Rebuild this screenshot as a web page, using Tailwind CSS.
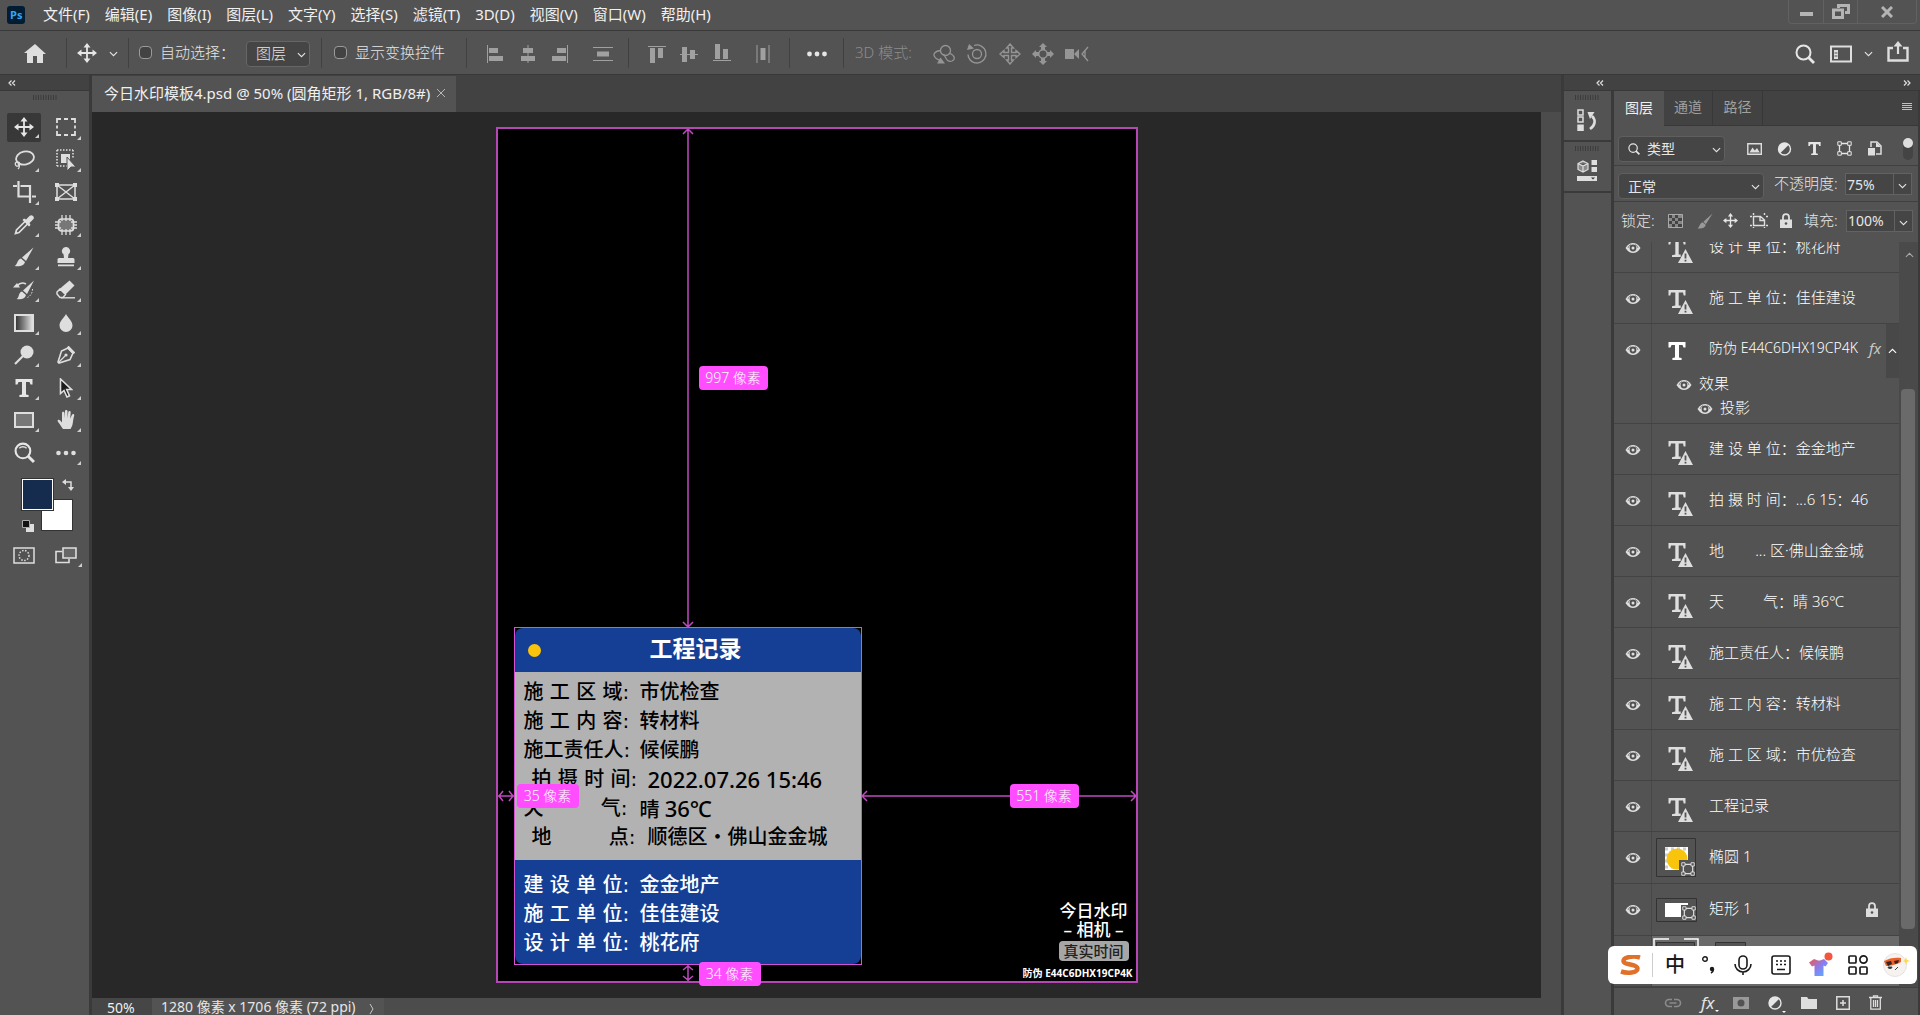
<!DOCTYPE html>
<html lang="zh-CN">
<head>
    <meta charset="UTF-8">
    <meta name="viewport" content="width=device-width, initial-scale=1.0">
    <title>今日水印模板4.psd @ 50%</title>
    <script src="https://cdn.jsdelivr.net/npm/@tailwindcss/browser@4"></script>
    <style>
        body { font-family: "Noto Sans", "Noto Sans CJK SC", sans-serif; }
        .label-font { font-family: "DejaVu Sans", "Noto Sans CJK SC", sans-serif; }
    </style>
</head>
<body class="bg-[#535353] text-[#e6e6e6]">

    <!-- Shared icons -->
    <svg class="hidden">
        <symbol id="eye" viewBox="0 0 16 12"><path d="M0.5 6C3 2.2 5.4 1 8 1s5 1.200 7.500 5C13 9.800 10.600 11 8 11S3 9.800 0.500 6z" fill="#dedede"/><circle cx="8" cy="6" r="3.400" fill="#505050"/><circle cx="8" cy="6" r="1.500" fill="#dedede"/><path d="M3 6a5 5 0 0 1 3-3.500M13 6a5 5 0 0 0-3-3.500" fill="none" stroke="#505050" stroke-width=".6"/></symbol>
        <symbol id="tee" viewBox="0 0 18 18"><path d="M.5 0h17v5.500h-2L14.500 3H11v12.500l2.600.6V18H4.400v-1.900l2.600-.6V3H3.500l-1 2.500h-2z" fill="currentColor"/></symbol>
        <symbol id="tee-warn" viewBox="0 0 25 25"><path d="M.5 0h17v5.500h-1.800L15 2.500h-4.300V15.500h2V18H4v-1.700l3.300-.8V2.500H3l-.7 3H.5z" fill="#dedede"/><path d="M17.500 9L26 25H9z" fill="#535353"/><path d="M17.500 10L25 24H10z" fill="#dedede"/><path d="M17.500 14.500v5M17.500 20.700v1.800" stroke="#535353" stroke-width="1.800"/></symbol>
        <symbol id="down" viewBox="0 0 10 6"><path d="M1 .8l4 4 4-4" fill="none" stroke="currentColor" stroke-width="1.200"/></symbol>
        <symbol id="corner" viewBox="0 0 4 4"><path d="M4 0v4H0z" fill="#cfcfcf"/></symbol>
        <symbol id="dbl-left" viewBox="0 0 8 6"><path d="M3.500.5L1 3l2.500 2.500M7 .5L4.500 3 7 5.500" fill="none" stroke="#dedede" stroke-width="1.200"/></symbol>
        <symbol id="dbl-right" viewBox="0 0 8 6"><path d="M1 .5L3.500 3 1 5.500M4.500.5L7 3 4.500 5.500" fill="none" stroke="#dedede" stroke-width="1.200"/></symbol>
        <symbol id="grip" viewBox="0 0 24 5"><path d="M.5 0v5M3 0v5M5.500 0v5M8 0v5M10.500 0v5M13 0v5M15.500 0v5M18 0v5M20.500 0v5M23 0v5" stroke="#3c3c3c"/></symbol>
        <symbol id="move" viewBox="0 0 20 20"><path d="M10 2v16M2 10h16" stroke="currentColor" stroke-width="1.800"/><path d="M10 0l3.500 4.500h-7zM10 20l3.500-4.500h-7zM0 10l4.500-3.500v7zM20 10l-4.500-3.500v7z" fill="currentColor"/></symbol>
        <symbol id="search" viewBox="0 0 20 20"><circle cx="8.500" cy="8.500" r="7" fill="none" stroke="currentColor" stroke-width="2"/><path d="M13.500 13.500l5.500 5.500" stroke="currentColor" stroke-width="2.800"/></symbol>
        <symbol id="shape" viewBox="0 0 15 15"><path d="M2.500 2.500h10v10h-10z" fill="none" stroke="currentColor" stroke-width="1.300"/><g fill="#535353" stroke="currentColor"><path d="M.8.800h3.500v3.500H.8zM10.700.8h3.500v3.500h-3.500zM.8 10.700h3.500v3.500H.8zM10.700 10.700h3.500v3.500h-3.500z"/></g></symbol>
        <symbol id="adjust" viewBox="0 0 14 14"><circle cx="7" cy="7" r="6" fill="none" stroke="currentColor" stroke-width="1.400"/><path d="M11.300 2.700A6 6 0 0 0 2.700 11.300z" fill="currentColor"/></symbol>
        <symbol id="lock" viewBox="0 0 12 15"><path d="M3 7V4.200a3 3 0 0 1 6 0V7" fill="none" stroke="#dedede" stroke-width="1.800"/><path d="M0 6.500h12V15H0z" fill="#dedede"/><circle cx="6" cy="10.500" r="1.300" fill="#535353"/></symbol>
    </svg>

    <div class="flex h-screen flex-col overflow-hidden">

        <!-- Menu bar -->
        <header class="flex h-[31px] shrink-0 items-start border-b border-[#383838]">
            <svg class="ml-[7px] mt-[6px] h-[18px] w-[18px]" viewBox="0 0 18 18"><rect width="18" height="18" rx="3" fill="#001d33"/><text x="3" y="13" font-size="11" font-weight="bold" font-family="Open Sans" fill="#35a5f8">Ps</text></svg>
            <nav class="ml-[18px] flex h-7 items-center gap-[15px] text-[15px] text-[#f0f0f0]">
                <a href="#">文件(F)</a>
                <a href="#">编辑(E)</a>
                <a href="#">图像(I)</a>
                <a href="#">图层(L)</a>
                <a href="#">文字(Y)</a>
                <a href="#">选择(S)</a>
                <a href="#">滤镜(T)</a>
                <a href="#">3D(D)</a>
                <a href="#">视图(V)</a>
                <a href="#">窗口(W)</a>
                <a href="#">帮助(H)</a>
            </nav>
            <div class="ml-auto mr-[3px] flex h-6 divide-x divide-[#616161] rounded-b border border-t-0 border-[#616161]">
                <button class="flex w-[35px] items-center justify-center" aria-label="最小化"><svg class="mt-1 h-1 w-[13px]" viewBox="0 0 13 4"><path d="M0 0h13v4H0z" fill="#b4b4b4"/></svg></button>
                <button class="flex w-[34px] items-center justify-center" aria-label="还原"><svg class="h-[15px] w-[18px]" viewBox="0 0 18 15"><path d="M6.500 4V1.500h10v7H13M1.500 6h9v7.500h-9z" fill="none" stroke="#b4b4b4" stroke-width="3"/></svg></button>
                <button class="flex w-[58px] items-center justify-center" aria-label="关闭"><svg class="h-3 w-3" viewBox="0 0 12 12"><path d="M1 1l10 10M11 1L1 11" stroke="#b4b4b4" stroke-width="3"/></svg></button>
            </div>
        </header>

        <!-- Options bar -->
        <div class="flex h-11 shrink-0 items-center border-b border-[#383838] text-[15px]">
            <div class="flex h-[30px] w-[67px] items-center justify-center border-r border-[#414141]">
                <button class="mr-[-3px] mt-[2px]" aria-label="主页"><svg class="h-[19px] w-[22px]" viewBox="0 0 22 19"><path d="M11 0l11 10h-3v9h-6v-7H9v7H3v-10H0z" fill="#dedede"/></svg></button>
            </div>
            <button class="flex h-[30px] w-[62px] items-center gap-[12px] border-r border-[#414141] pl-[10px]" aria-label="移动工具"><svg class="h-5 w-5"><use href="#move"/></svg><svg class="mt-[2px] h-[6px] w-[9px]"><use href="#down"/></svg></button>
            <input id="auto" type="checkbox" class="ml-[10px] h-[13px] w-[13px] appearance-none rounded-sm border border-[#9b9b9b] bg-[#434343]">
            <label for="auto" class="ml-2 w-[73px] whitespace-nowrap font-light">自动选择：</label>
            <div class="relative ml-[13px] mt-[2px] w-[64px]">
                <select aria-label="自动选择" class="h-[26px] w-full appearance-none rounded-sm border border-[#666] bg-[#454545] pl-[9px] text-[15px] font-light"><option>图层</option></select>
                <svg class="absolute right-1 top-[11px] h-[6px] w-[9px]"><use href="#down"/></svg>
            </div>
            <div class="ml-[11px] mr-[12px] h-[30px] w-px bg-[#414141]"></div>
            <input id="trans" type="checkbox" class="h-[13px] w-[13px] appearance-none rounded-sm border border-[#9b9b9b] bg-[#434343]">
            <label for="trans" class="ml-[8px] w-[90px] whitespace-nowrap font-light">显示变换控件</label>
            <div class="ml-[21px] h-[30px] w-px bg-[#414141]"></div>
            <!-- Align -->
            <div class="flex h-[30px] w-[162px] items-center border-r border-[#414141] pl-[19px] pt-[2px] text-[#a0a0a0]">
                <svg class="h-5 w-[18px]" viewBox="0 0 18 20"><path d="M1.500 1v18" stroke="currentColor"/><path d="M3 4h9v5H3zM3 12h14v5H3z" fill="currentColor"/></svg>
                <svg class="ml-[15px] h-5 w-[18px]" viewBox="0 0 18 20"><path d="M9 1v18" stroke="currentColor"/><path d="M4 4h10v5H4zM2 12h14v5H2z" fill="currentColor"/></svg>
                <svg class="ml-[14px] h-5 w-[18px]" viewBox="0 0 18 20"><path d="M16.500 1v18" stroke="currentColor"/><path d="M6 4h9v5H6zM1 12h14v5H1z" fill="currentColor"/></svg>
                <svg class="ml-[24px] h-5 w-[20px]" viewBox="0 0 20 20"><path d="M0 3.500h20M0 16.500h20" stroke="currentColor"/><path d="M4 7.500h12v5H4z" fill="currentColor"/></svg>
            </div>
            <div class="flex h-[30px] w-[161px] items-center border-r border-[#414141] pl-[18px] pt-[2px] text-[#a0a0a0]">
                <svg class="h-5 w-[20px]" viewBox="0 0 20 20"><path d="M1 2.500h18" stroke="currentColor"/><path d="M3 4h5v15H3zM11 4h5v10h-5z" fill="currentColor"/></svg>
                <svg class="ml-[12px] h-5 w-[20px]" viewBox="0 0 20 20"><path d="M1 10.500h18" stroke="currentColor"/><path d="M3 3h5v15H3zM11 6h5v9h-5z" fill="currentColor"/></svg>
                <svg class="ml-[13px] h-5 w-[20px]" viewBox="0 0 20 20"><path d="M1 16.500h18" stroke="currentColor"/><path d="M3 0h5v15H3zM11 5h5v10h-5z" fill="currentColor"/></svg>
                <svg class="ml-[24px] h-5 w-[14px]" viewBox="0 0 14 20"><path d="M1 1v18M13 1v18" stroke="currentColor"/><path d="M4.500 4h5v12h-5z" fill="currentColor"/></svg>
            </div>
            <button class="flex h-[30px] w-[54px] items-center justify-center border-r border-[#414141] pt-[2px]" aria-label="更多"><svg class="h-[6px] w-5" viewBox="0 0 20 6"><g fill="#e6e6e6"><circle cx="2.500" cy="3" r="2.400"/><circle cx="10" cy="3" r="2.400"/><circle cx="17.500" cy="3" r="2.400"/></g></svg></button>
            <span class="ml-[11px] w-[78px] whitespace-nowrap font-light text-[#8c8c8c]">3D 模式:</span>
            <div class="flex items-center gap-[11px] pt-[2px] text-[#959595]">
                <svg class="h-[22px] w-[22px]" viewBox="0 0 22 22"><circle cx="12.500" cy="7.500" r="5" fill="none" stroke="currentColor" stroke-width="1.300"/><path d="M7.500 7.500C2 8 0 11 1.500 13.500c1 2 4 3.500 7 4M17 10.500c5 2 5.500 6 2 7.500-2.500 1-5-.5-6.500-3.500l-2-3.500" fill="none" stroke="currentColor" stroke-width="1.300"/><path d="M4 20.500l3.500-6 4.500 6z" fill="currentColor"/></svg>
                <svg class="h-[22px] w-[22px]" viewBox="0 0 22 22"><circle cx="11" cy="11" r="4.500" fill="none" stroke="currentColor" stroke-width="1.300"/><path d="M8 2.500a9 9 0 1 1-6 9M2.500 14A9 9 0 0 0 11 20" fill="none" stroke="currentColor" stroke-width="1.300"/><path d="M1 7l2-6 5 4.500z" fill="currentColor"/></svg>
                <svg class="h-[22px] w-[22px]" viewBox="0 0 22 22"><path d="M11 1l3.500 4h-2v4.500H17v-2l4 3.500-4 3.500v-2h-4.500V17h2L11 21l-3.500-4h2v-4.500H5v2L1 11l4-3.500v2h4.500V5h-2z" fill="none" stroke="currentColor" stroke-width="1.400"/></svg>
                <svg class="h-[22px] w-[22px]" viewBox="0 0 22 22"><circle cx="11" cy="11" r="4.200" fill="none" stroke="currentColor" stroke-width="1.500"/><path d="M11 0l4 4h-2v3H9V4H7zM11 22l4-4h-2v-3H9v3H7zM0 11l4-4v2h3v4H4v2zM22 11l-4-4v2h-3v4h3v2z" fill="currentColor"/></svg>
                <svg class="h-[22px] w-[24px]" viewBox="0 0 24 22"><path d="M0 6h9v10H0zM9 11l5-5v10z" fill="currentColor"/><path d="M23 4l-6 7 6 7M20 8v6" fill="none" stroke="currentColor" stroke-width="1.300"/></svg>
            </div>
            <div class="ml-auto flex items-center pr-[11px] pt-[2px]">
                <button aria-label="搜索"><svg class="h-5 w-5"><use href="#search"/></svg></button>
                <button class="ml-[15px]" aria-label="工作区"><svg class="h-[18px] w-[22px]" viewBox="0 0 22 18"><path d="M1 1.500h20v15H1z" fill="none" stroke="#dedede" stroke-width="2"/><path d="M4 5h4v9H4z" fill="#dedede"/><path d="M4.500 8h3M4.500 11h3" stroke="#535353"/></svg></button>
                <svg class="ml-[12px] h-[6px] w-[9px]"><use href="#down"/></svg>
                <button class="ml-[14px] pb-1" aria-label="共享"><svg class="h-[21px] w-[22px]" viewBox="0 0 22 21"><path d="M6 7H1.500v12.500h19V7H16" fill="none" stroke="#dedede" stroke-width="2.400"/><path d="M11 13V3" stroke="#dedede" stroke-width="2.200"/><path d="M6.500 5.500L11 0l4.500 5.500z" fill="#dedede"/></svg></button>
            </div>
        </div>

        <div class="flex min-h-0 flex-1">

            <!-- Toolbar -->
            <aside class="flex w-[92px] shrink-0 flex-col border-r-[3px] border-[#3a3a3a]">
                <div class="flex h-4 shrink-0 items-center border-b border-[#383838] bg-[#424242] pl-2"><svg class="h-[6px] w-2"><use href="#dbl-left"/></svg></div>
                <svg class="mx-auto mt-1 h-[5px] w-6 shrink-0"><use href="#grip"/></svg>
                <div class="mt-[11px] grid h-[358px] shrink-0 auto-rows-fr grid-cols-[38px_38px] gap-x-1 pl-[5px] *:relative *:flex *:items-center *:justify-center">
                    <button class="rounded-sm border-2 border-[#535353] bg-[#383838]" aria-label="移动"><svg class="h-5 w-5"><use href="#move"/></svg><svg class="absolute bottom-1 right-[2px] h-1 w-1"><use href="#corner"/></svg></button>
                    <button aria-label="选框"><svg class="h-[18px] w-5" viewBox="0 0 20 18"><path d="M1 5V1h4M8 1h4M15 1h4v4M19 7.500v3M19 13v4h-4M12 17H8M5 17H1v-4M1 10.500v-3" fill="none" stroke="#dedede" stroke-width="1.800"/></svg><svg class="absolute bottom-1 right-1 h-1 w-1"><use href="#corner"/></svg></button>
                    <button aria-label="套索"><svg class="h-5 w-[22px]" viewBox="0 0 22 20"><ellipse cx="12" cy="8" rx="9" ry="6.500" transform="rotate(-12 12 8)" fill="none" stroke="#dedede" stroke-width="1.800"/><circle cx="4.500" cy="14" r="2.200" fill="none" stroke="#dedede" stroke-width="1.300"/><path d="M5 14c2 2 2 3 0 5" fill="none" stroke="#dedede" stroke-width="1.300"/></svg><svg class="absolute bottom-1 right-1 h-1 w-1"><use href="#corner"/></svg></button>
                    <button aria-label="对象选择"><svg class="h-[22px] w-[20px]" viewBox="0 0 20 22"><path d="M1 1h16M1 1v16M17 1v9M1 17h10" fill="none" stroke="#dedede" stroke-width="1.600" stroke-dasharray="1.500 1.500"/><path d="M5 5h9v9H5z" fill="#dedede"/><path d="M11 8l9 10h-5l-4 4z" fill="#dedede" stroke="#535353"/></svg><svg class="absolute bottom-1 right-1 h-1 w-1"><use href="#corner"/></svg></button>
                    <button aria-label="裁剪"><svg class="h-[22px] w-[23px]" viewBox="0 0 23 22"><path d="M0 5h4M5.500 0v15.500h12M7.500 5H17v17M19 15.500h4" fill="none" stroke="#dedede" stroke-width="2.200"/></svg><svg class="absolute bottom-1 right-1 h-1 w-1"><use href="#corner"/></svg></button>
                    <button aria-label="图框"><svg class="h-[18px] w-[22px]" viewBox="0 0 22 18"><path d="M2 2h18v14H2zM2 2l18 14M20 2L2 16" fill="none" stroke="#dedede" stroke-width="1.500"/><path d="M0 0h4v4H0zM18 0h4v4h-4zM0 14h4v4H0zM18 14h4v4h-4z" fill="#dedede"/></svg></button>
                    <button aria-label="吸管"><svg class="h-5 w-5" viewBox="0 0 20 20"><path d="M11 6.500L2.500 15l-1 3.500 3.500-1L13.500 9" fill="none" stroke="#dedede" stroke-width="1.700"/><path d="M8.500 5l1.500-1.500 2 1L15.500 1a2.300 2.300 0 0 1 3.500 3.500L15.500 8l1 2L15 11.500z" fill="#dedede"/></svg><svg class="absolute bottom-1 right-1 h-1 w-1"><use href="#corner"/></svg></button>
                    <button aria-label="修补"><svg class="h-5 w-[22px]" viewBox="0 0 22 20"><rect x="3.500" y="4" width="15" height="12" rx="3" fill="#777" stroke="#dedede" stroke-width="1.700"/><path d="M7 0v6M11 0v6M15 0v6M7 14v6M11 14v6M15 14v6M0 7h6M0 10h4M0 13h6M16 7h6M18 10h4M16 13h6" stroke="#dedede" stroke-width="1.300"/></svg><svg class="absolute bottom-1 right-1 h-1 w-1"><use href="#corner"/></svg></button>
                    <button aria-label="画笔"><svg class="h-5 w-5" viewBox="0 0 20 20"><path d="M19.500.5L12 14l-4-3.500z" fill="#dedede"/><path d="M7 11.500l4 3.500c-1 4-6 5-10.500 4 3-1 2.500-6.500 6.500-7.500z" fill="#dedede"/></svg><svg class="absolute bottom-1 right-1 h-1 w-1"><use href="#corner"/></svg></button>
                    <button aria-label="图章"><svg class="h-5 w-[18px]" viewBox="0 0 18 20"><path d="M9 0a4 4 0 0 1 2.500 7.200L11 11h5a1.500 1.500 0 0 1 1.500 1.500V16H.5v-3.500A1.500 1.500 0 0 1 2 11h5l-.5-3.800A4 4 0 0 1 9 0zM1 17.500h16v1.700H1z" fill="#dedede"/></svg><svg class="absolute bottom-1 right-1 h-1 w-1"><use href="#corner"/></svg></button>
                    <button aria-label="历史画笔"><svg class="h-5 w-[22px]" viewBox="0 0 22 20"><path d="M21 .5L14 14l-4-3.500zM9 11.500l4 3.500c-1 4-5 5-9.500 4 3-1 1.500-6.500 5.500-7.500z" fill="#dedede"/><path d="M4 6c2.500-3 6-3.500 9-2" fill="none" stroke="#dedede" stroke-width="1.500"/><path d="M0 7.500L4 3l3 4.500z" fill="#dedede"/><path d="M19.500 9c0 4-2 7-5 8.500" fill="none" stroke="#dedede" stroke-dasharray="1.500 1.500"/></svg><svg class="absolute bottom-1 right-1 h-1 w-1"><use href="#corner"/></svg></button>
                    <button aria-label="橡皮擦"><svg class="h-[19px] w-5" viewBox="0 0 20 19"><path d="M13.500.5l5 5-9 9-6-5.500z" fill="#dedede"/><path d="M4 9l5.500 5.500-2.500 3H4L1 14v-2z" fill="none" stroke="#dedede" stroke-width="1.500"/><path d="M5 17.800h14" stroke="#dedede" stroke-width="1.400"/></svg><svg class="absolute bottom-1 right-1 h-1 w-1"><use href="#corner"/></svg></button>
                    <button aria-label="渐变"><span class="h-[18px] w-5 border-2 border-[#dedede] bg-linear-to-r from-[#383838] to-[#dedede]"></span><svg class="absolute bottom-1 right-1 h-1 w-1"><use href="#corner"/></svg></button>
                    <button aria-label="模糊"><svg class="h-5 w-[14px]" viewBox="0 0 14 20"><path d="M7 1c2 4 6.500 7 6.500 11.500a6.500 6.500 0 0 1-13 0C.5 8 5 5 7 1z" fill="#dedede"/></svg><svg class="absolute bottom-1 right-1 h-1 w-1"><use href="#corner"/></svg></button>
                    <button aria-label="减淡"><svg class="h-5 w-5" viewBox="0 0 20 20"><circle cx="13" cy="7" r="6.500" fill="#dedede"/><path d="M9 11l-8 8" stroke="#dedede" stroke-width="2.200"/></svg><svg class="absolute bottom-1 right-1 h-1 w-1"><use href="#corner"/></svg></button>
                    <button aria-label="钢笔"><svg class="h-[18px] w-[18px]" viewBox="0 0 18 18"><path d="M11 2l5 5-3 6.500L2 17 1 16 4.500 5z" fill="none" stroke="#dedede" stroke-width="1.600"/><path d="M11.500.5l6 6-1.500 1-5.500-5.500zM1.500 16.500L8 10" stroke="#dedede" stroke-width="1.200" fill="#dedede"/><circle cx="9" cy="9" r="1.600" fill="#dedede"/></svg><svg class="absolute bottom-1 right-1 h-1 w-1"><use href="#corner"/></svg></button>
                    <button aria-label="文字"><svg class="h-[18px] w-[18px]"><use href="#tee"/></svg><svg class="absolute bottom-1 right-1 h-1 w-1"><use href="#corner"/></svg></button>
                    <button aria-label="路径选择"><svg class="h-5 w-[14px]" viewBox="0 0 14 20"><path d="M1.500 1v14.500L5 12.500l3 6.500 2.500-1.200-2.800-6.300H12.500z" fill="#1c1c1c" stroke="#dedede" stroke-width="1.600"/></svg><svg class="absolute bottom-1 right-1 h-1 w-1"><use href="#corner"/></svg></button>
                    <button aria-label="矩形"><span class="h-4 w-5 border-2 border-[#dedede] bg-[#777]"></span><svg class="absolute bottom-1 right-1 h-1 w-1"><use href="#corner"/></svg></button>
                    <button aria-label="抓手"><svg class="h-5 w-[19px]" viewBox="0 0 19 20"><path d="M6 19C4 16 2.500 14 .8 11.500c-.8-1.500 1-2.500 2.200-1.200l2 2.200V3c0-1.700 2.300-1.700 2.500 0l.5 5.500V1.300c0-1.700 2.500-1.700 2.500 0v7.200L11.300 2c.3-1.600 2.500-1.300 2.400.3l-.5 6.500 1.800-4c.7-1.500 2.600-.7 2.200.8-.8 3-1 5-1.500 8-.3 2.400-1 3.400-2.200 5.400z" fill="#dedede"/></svg><svg class="absolute bottom-1 right-1 h-1 w-1"><use href="#corner"/></svg></button>
                    <button aria-label="缩放"><svg class="h-[21px] w-[21px]" viewBox="0 0 20 20"><use href="#search" width="20" height="20"/><path d="M5 6c2-2 5-2 7 0" fill="none" stroke="#dedede" stroke-width="1.300"/></svg></button>
                    <button aria-label="更多工具"><svg class="h-[6px] w-5" viewBox="0 0 20 6"><g fill="#dedede"><circle cx="2.500" cy="3" r="2.300"/><circle cx="10" cy="3" r="2.300"/><circle cx="17.500" cy="3" r="2.300"/></g></svg><svg class="absolute bottom-1 right-1 h-1 w-1"><use href="#corner"/></svg></button>
                </div>
                <!-- Colour swatches -->
                <div class="relative mt-[10px] h-[54px] shrink-0">
                    <button class="absolute left-[41px] top-5 h-8 w-8 border border-[#333] bg-white" aria-label="背景色"></button>
                    <button class="absolute left-[22px] top-0 h-[31px] w-[31px] border border-white bg-[#152c4e] outline outline-[#333]" aria-label="前景色"></button>
                    <svg class="absolute left-[62px] top-0 h-3 w-3" viewBox="0 0 12 12"><path d="M3 3h6v6" fill="none" stroke="#dedede" stroke-width="1.500"/><path d="M0 3l4-3v6zM9 12L6 8h6z" fill="#dedede"/></svg>
                    <svg class="absolute left-[22px] top-[41px] h-3 w-3" viewBox="0 0 12 12"><path d="M4 4h8v8H4z" fill="#dedede"/><path d="M.5.5h7v7h-7z" fill="#111" stroke="#aaa"/></svg>
                </div>
                <div class="relative mt-[14px] flex shrink-0 items-center pl-[13px]">
                    <button aria-label="快速蒙版"><svg class="h-[17px] w-[22px]" viewBox="0 0 22 17"><path d="M1 1h20v15H1z" fill="none" stroke="#dedede" stroke-width="1.500"/><circle cx="11" cy="8.500" r="5" fill="none" stroke="#dedede" stroke-width="1.500" stroke-dasharray="1.500 1.500"/></svg></button>
                    <button class="ml-5" aria-label="屏幕模式"><svg class="h-[17px] w-[22px]" viewBox="0 0 22 17"><path d="M7 4.500H1v11h13V12" fill="none" stroke="#dedede" stroke-width="1.600"/><path d="M8 1h13v10H8z" fill="#666" stroke="#dedede" stroke-width="1.600"/></svg></button>
                    <svg class="absolute -bottom-[3px] left-[78px] h-1 w-1"><use href="#corner"/></svg>
                </div>
            </aside>

            <!-- Document -->
            <main class="flex min-w-0 flex-1 flex-col">
                <div class="flex h-[37px] shrink-0 bg-[#424242] pt-px">
                    <div class="flex items-center bg-[#535353] pb-[2px] pl-3 pr-[11px] text-[15px] text-[#f0f0f0]">
                        <span class="whitespace-nowrap">今日水印模板4.psd @ 50% (圆角矩形 1, RGB/8#)</span>
                        <button class="ml-[7px]" aria-label="关闭文档"><svg class="h-2 w-2" viewBox="0 0 8 8"><path d="M0 0l8 8M8 0L0 8" stroke="#b5b5b5"/></svg></button>
                    </div>
                </div>
                <div class="flex min-h-0 flex-1">
                    <div class="flex flex-1 items-center justify-center overflow-hidden bg-[#282828]">
                        <!-- Artboard -->
                        <div class="relative h-[856px] w-[642px] shrink-0 border-2 border-[#b646b6] bg-black">
                            <!-- Record card -->
                            <section class="absolute bottom-4 left-4 w-[348px] border border-[#d552d5]">
                                <div class="overflow-hidden rounded-lg bg-[#153f95] text-[20px] font-medium">
                                    <div class="relative flex h-11 items-center justify-center">
                                        <span class="absolute left-[13px] h-[13px] w-[13px] rounded-full bg-[#f9c50c]"></span>
                                        <h1 class="pb-[3px] pl-4 text-[23px] font-bold leading-none text-white">工程记录</h1>
                                    </div>
                                    <dl class="grid h-[188px] auto-rows-[29px] content-center bg-[#b2b2b2] pb-[3px] pl-[9px] text-black *:flex *:items-center *:whitespace-pre [&_dt]:w-[116px]">
                                        <div><dt class="label-font">施 工 区 域:</dt><dd>市优检查</dd></div>
                                        <div><dt class="label-font">施 工 内 容:</dt><dd>转材料</dd></div>
                                        <div><dt class="label-font">施工责任人:</dt><dd>候候鹏</dd></div>
                                        <div class="pl-2"><dt class="label-font">拍 摄 时 间:</dt><dd class="text-[22px]">2022.07.26 15:46</dd></div>
                                        <div><dt class="label-font">天         气:</dt><dd>晴 <span class="text-[22px]">36℃</span></dd></div>
                                        <div class="pl-2"><dt class="label-font">地         点:</dt><dd>顺德区・佛山金金城</dd></div>
                                    </dl>
                                    <dl class="grid h-[104px] auto-rows-[29px] content-center pl-[9px] pt-1 text-white *:flex *:items-center *:whitespace-pre [&_dt]:w-[116px]">
                                        <div><dt class="label-font">建 设 单 位:</dt><dd>金金地产</dd></div>
                                        <div><dt class="label-font">施 工 单 位:</dt><dd>佳佳建设</dd></div>
                                        <div><dt class="label-font">设 计 单 位:</dt><dd>桃花府</dd></div>
                                    </dl>
                                </div>
                            </section>
                            <!-- Watermark -->
                            <div class="absolute bottom-0 right-[3px] flex flex-col items-end text-white">
                                <div class="mr-1 flex w-[70px] flex-col items-center text-[17px] font-medium leading-[19px]">
                                    <span class="whitespace-nowrap">今日水印</span>
                                    <span class="whitespace-nowrap">– 相机 –</span>
                                    <span class="mt-[2px] h-5 w-full rounded-sm bg-[#a6a6a6] text-center text-[15px] leading-5 text-[#222]">真实时间</span>
                                </div>
                                <span class="mt-1 whitespace-nowrap text-[10px] font-bold leading-4">防伪 E44C6DHX19CP4K</span>
                            </div>
                            <!-- Distance guides -->
                            <svg class="absolute left-[184px] top-0 h-[499px] w-3" viewBox="0 0 12 499"><path d="M6 0v499M1 5l5-5 5 5M1 493l5 5 5-5" fill="none" stroke="#c04ac0" stroke-width="1.500"/></svg>
                            <svg class="absolute bottom-0 left-[184px] h-4 w-3" viewBox="0 0 12 16"><path d="M6 0v16M1 5l5-4 5 4M1 11l5 4 5-4" fill="none" stroke="#c04ac0" stroke-width="1.500"/></svg>
                            <svg class="absolute left-0 top-[661px] h-3 w-4" viewBox="0 0 16 12"><path d="M0 6h16M5 1L1 6l4 5M11 1l4 5-4 5" fill="none" stroke="#c04ac0" stroke-width="1.500"/></svg>
                            <svg class="absolute right-0 top-[661px] h-3 w-[274px]" viewBox="0 0 274 12"><path d="M0 6h274M5 1L0 6l5 5M269 1l5 5-5 5" fill="none" stroke="#c04ac0" stroke-width="1.500"/></svg>
                            <span class="absolute left-[201px] top-[237px] h-6 w-[69px] rounded bg-[#ff4dff] text-center text-[14px] font-light leading-6 text-white">997 像素</span>
                            <span class="absolute left-[19px] top-[655px] h-6 w-[62px] rounded bg-[#ff4dff] text-center text-[14px] font-light leading-6 text-white">35 像素</span>
                            <span class="absolute left-[512px] top-[655px] h-6 w-[69px] rounded bg-[#ff4dff] text-center text-[14px] font-light leading-6 text-white">551 像素</span>
                            <span class="absolute left-[201px] top-[833px] h-6 w-[62px] rounded bg-[#ff4dff] text-center text-[14px] font-light leading-6 text-white">34 像素</span>
                        </div>
                    </div>
                    <div class="w-5 bg-[#4c4c4c]"></div>
                </div>
                <!-- Status bar -->
                <footer class="flex h-[17px] shrink-0 overflow-hidden bg-[#4c4c4c] text-[14px] leading-5">
                    <span class="w-[60px] bg-[#464646] pl-[15px] text-[#f0f0f0]">50%</span>
                    <span class="flex items-center gap-[13px] whitespace-nowrap bg-[#535353] pl-[9px] pr-[10px]">1280 像素 x 1706 像素 (72 ppi)<svg class="mt-1 h-[10px] w-[5px]" viewBox="0 0 5 10"><path d="M1 0l3 5-3 5" fill="none" stroke="#c8c8c8"/></svg></span>
                </footer>
            </main>

            <!-- Docked panels -->
            <aside class="flex w-[359px] shrink-0 flex-col border-l-[3px] border-[#3a3a3a]">
                <div class="flex h-4 shrink-0 items-center border-b border-[#383838] bg-[#424242] pr-[9px]">
                    <svg class="ml-8 h-[6px] w-2"><use href="#dbl-left"/></svg>
                    <svg class="ml-auto h-[6px] w-2"><use href="#dbl-right"/></svg>
                </div>
                <div class="flex min-h-0 flex-1">
                    <div class="w-[50px] shrink-0 border-r-[3px] border-[#3a3a3a]">
                        <div class="flex h-[51px] flex-col items-center border-b-2 border-[#3a3a3a] pr-[2px] pt-1">
                            <svg class="h-[5px] w-6"><use href="#grip"/></svg>
                            <button class="mt-[9px]" aria-label="历史记录"><svg class="h-[22px] w-5" viewBox="0 0 20 22"><path d="M1 1h5v5H1zM1 8h5v5H1z" fill="none" stroke="#dedede" stroke-width="1.500"/><path d="M.3 15.500h6.500V22H.3z" fill="#dedede"/><path d="M15 7c4 4 3.500 9-2 13" fill="none" stroke="#dedede" stroke-width="2.600"/><path d="M10.500 3h7L13 10z" fill="#dedede"/></svg></button>
                        </div>
                        <div class="flex h-[51px] flex-col items-center border-b-2 border-[#3a3a3a] pr-[2px] pt-1">
                            <svg class="h-[5px] w-6"><use href="#grip"/></svg>
                            <button class="mt-[9px]" aria-label="库"><svg class="h-[21px] w-5" viewBox="0 0 20 21"><path d="M6 1l5 2.500v6L6 12 1 9.500v-6zM1 3.500L6 6l5-2.500M6 6v6" fill="#8a8a8a" stroke="#dedede" stroke-width="1.200"/><path d="M14.500 0h5.500v5h-5.500zM14.500 7h5.500v5h-5.500zM0 16h20v5H0z" fill="#dedede"/><path d="M14 17.500h4l-2 2z" fill="#333"/></svg></button>
                        </div>
                    </div>

                    <section class="flex min-w-0 flex-1 flex-col border-r-2 border-[#3a3a3a]">
                        <div class="flex h-[35px] shrink-0 border-b border-[#383838] bg-[#424242] text-[14px] text-[#a0a0a0] [&>button]:pb-[3px]">
                            <button class="-mb-px w-[50px] bg-[#535353] text-[#f0f0f0]">图层</button>
                            <button class="w-[49px] border-r border-[#383838]">通道</button>
                            <button class="w-[50px] border-r border-[#383838]">路径</button>
                            <button class="ml-auto mr-[6px]" aria-label="面板菜单"><svg class="h-[7px] w-[10px]" viewBox="0 0 10 7"><path d="M0 .5h10M0 2.500h10M0 4.500h10M0 6.500h10" stroke="#c0c0c0"/></svg></button>
                        </div>
                        <!-- Filter -->
                        <div class="flex h-10 shrink-0 items-center border-b border-[#404040] pl-1 pt-[6px]">
                            <div class="relative w-[107px]">
                                <select aria-label="类型" class="h-[26px] w-full appearance-none rounded-sm border border-[#5f5f5f] bg-[#454545] pl-7 text-[14px]"><option>类型</option></select>
                                <svg class="absolute left-[10px] top-[7px] h-3 w-3"><use href="#search"/></svg>
                                <svg class="absolute right-1 top-[11px] h-[6px] w-[9px]"><use href="#down"/></svg>
                            </div>
                            <div class="ml-[22px] flex items-center gap-[15px]">
                                <svg class="h-3 w-[15px]" viewBox="0 0 15 12"><path d="M.8.800h13.500v10.500H.8z" fill="none" stroke="#dedede" stroke-width="1.400"/><path d="M2.500 9.500l3-5 2.300 3L10 5l2.800 4.500z" fill="#dedede"/></svg>
                                <svg class="h-[14px] w-[15px]"><use href="#adjust"/></svg>
                                <svg class="h-[13px] w-[15px]"><use href="#tee"/></svg>
                                <svg class="h-[15px] w-[15px]"><use href="#shape"/></svg>
                                <svg class="h-[15px] w-[15px]" viewBox="0 0 15 15"><path d="M4 6V1h6l4 4v8H9" fill="none" stroke="#dedede" stroke-width="1.500"/><path d="M9 1v5h5M1 7h7v7.500H1z" fill="#dedede"/></svg>
                                <button class="ml-[6px] flex h-[22px] w-[10px] items-start rounded-full bg-[#444]" aria-label="滤镜开关"><span class="h-[10px] w-[10px] rounded-full bg-[#dedede]"></span></button>
                            </div>
                        </div>
                        <!-- Blend mode -->
                        <div class="flex h-9 shrink-0 items-start border-b border-[#404040] pl-1 pt-[7px]">
                            <div class="relative w-[146px]">
                                <select aria-label="混合模式" class="h-[26px] w-full appearance-none rounded-sm border border-[#5f5f5f] bg-[#454545] pl-[9px] text-[14px]"><option>正常</option></select>
                                <svg class="absolute right-1 top-[11px] h-[6px] w-[9px]"><use href="#down"/></svg>
                            </div>
                            <label for="opacity" class="ml-[10px] w-[71px] whitespace-nowrap text-[15px] font-light leading-5">不透明度:</label>
                            <input id="opacity" value="75%" class="h-[22px] w-[49px] border border-[#626262] bg-[#454545] pl-px text-[14px]">
                            <button class="flex h-[22px] w-[18px] items-center justify-center border border-l-0 border-[#626262] bg-[#454545] pt-1" aria-label="不透明度滑块"><svg class="h-[6px] w-[9px]"><use href="#down"/></svg></button>
                        </div>
                        <!-- Lock -->
                        <div class="flex h-10 shrink-0 items-center pl-[7px] pb-[3px] text-[15px] font-light">
                            <span class="w-[47px] whitespace-nowrap">锁定:</span>
                            <svg class="h-[14px] w-[15px]" viewBox="0 0 15 14"><path d="M.5.500h14v13H.5z" fill="#888" stroke="#aaa"/><path d="M1 1h3v3H1zM7 1h3v3H7zM4 4h3v3H4zM10 4h4v3h-4zM1 7h3v3H1zM7 7h3v3H7zM4 10h3v3H4zM10 10h4v3h-4z" fill="#444"/></svg>
                            <svg class="ml-[14px] h-4 w-4" viewBox="0 0 20 20"><path d="M19.500.5L11 14l-3-3zM7 11.500l4 3.500c-1 4-6 5-10.500 4 3-1 2.500-6.500 6.500-7.500z" fill="#999"/></svg>
                            <svg class="ml-[10px] h-[15px] w-[15px]"><use href="#move"/></svg>
                            <svg class="ml-3 h-[15px] w-[18px]" viewBox="0 0 18 15"><path d="M3.500 3.500h7l4 3.500v5.500h-11zM10 3.500V7.500h4.500M0 3.500h2M3.500 0v2M14.500 0v2M16 3.500h2M0 12.500h2M3.500 14v1M16 12.500h2M14.500 14v1" fill="none" stroke="#dedede" stroke-width="1.400"/></svg>
                            <svg class="ml-3 h-[15px] w-3"><use href="#lock"/></svg>
                            <label for="fill" class="ml-3 w-[42px] whitespace-nowrap">填充:</label>
                            <input id="fill" value="100%" class="h-[22px] w-[49px] border border-[#626262] bg-[#454545] pl-px text-[14px] font-normal">
                            <button class="flex h-[22px] w-[18px] items-center justify-center border border-l-0 border-[#626262] bg-[#454545] pt-1" aria-label="填充滑块"><svg class="h-[6px] w-[9px]"><use href="#down"/></svg></button>
                        </div>

                        <!-- Layers -->
                        <div class="flex min-h-0 flex-1">
                            <ul class="flex min-w-0 flex-1 flex-col justify-end overflow-hidden text-[15px] font-light text-white *:flex *:shrink-0 *:border-b *:border-[#434343] [&>li>button]:flex [&>li>button]:w-[38px] [&>li>button]:shrink-0 [&>li>button]:justify-center [&>li>button]:border-r [&>li>button]:border-[#484848] [&>li>button]:pt-5 [&>li>span]:whitespace-pre [&>li>span]:pl-[17px] [&>li>span]:leading-[48px]">
                                <li class="h-[51px]"><button aria-label="显示图层"><svg class="h-3 w-4"><use href="#eye"/></svg></button><svg class="ml-4 mt-[17px] h-[25px] w-[25px]"><use href="#tee-warn"/></svg><span class="-ml-px">设 计 单 位：桃花府</span></li>
                                <li class="h-[51px]"><button aria-label="显示图层"><svg class="h-3 w-4"><use href="#eye"/></svg></button><svg class="ml-4 mt-[17px] h-[25px] w-[25px]"><use href="#tee-warn"/></svg><span class="-ml-px">施 工 单 位：佳佳建设</span></li>
                                <li class="relative h-[100px]">
                                    <button aria-label="显示图层"><svg class="h-3 w-4"><use href="#eye"/></svg></button><svg class="ml-4 mt-[18px] h-[18px] w-[18px]"><use href="#tee"/></svg><span class="ml-[6px] text-[14px]">防伪 E44C6DHX19CP4K</span>
                                    <i class="absolute right-[18px] top-3 font-normal leading-6 text-[#c8c8c8]">fx</i>
                                    <div class="absolute right-0 top-0 flex h-[54px] w-[13px] items-center justify-center bg-[#484848]"><svg class="h-[6px] w-[9px] rotate-180"><use href="#down"/></svg></div>
                                    <div class="absolute left-[62px] top-[47px] flex items-center gap-[7px] leading-6"><svg class="mt-1 h-3 w-4"><use href="#eye"/></svg>效果</div>
                                    <div class="absolute left-[83px] top-[71px] flex items-center gap-[7px] leading-6"><svg class="mt-1 h-3 w-4"><use href="#eye"/></svg>投影</div>
                                </li>
                                <li class="h-[51px]"><button aria-label="显示图层"><svg class="h-3 w-4"><use href="#eye"/></svg></button><svg class="ml-4 mt-[17px] h-[25px] w-[25px]"><use href="#tee-warn"/></svg><span class="-ml-px">建 设 单 位：金金地产</span></li>
                                <li class="h-[51px]"><button aria-label="显示图层"><svg class="h-3 w-4"><use href="#eye"/></svg></button><svg class="ml-4 mt-[17px] h-[25px] w-[25px]"><use href="#tee-warn"/></svg><span class="-ml-px">拍 摄 时 间：...6 15：46</span></li>
                                <li class="h-[51px]"><button aria-label="显示图层"><svg class="h-3 w-4"><use href="#eye"/></svg></button><svg class="ml-4 mt-[17px] h-[25px] w-[25px]"><use href="#tee-warn"/></svg><span class="-ml-px">地        ... 区·佛山金金城</span></li>
                                <li class="h-[51px]"><button aria-label="显示图层"><svg class="h-3 w-4"><use href="#eye"/></svg></button><svg class="ml-4 mt-[17px] h-[25px] w-[25px]"><use href="#tee-warn"/></svg><span class="-ml-px">天          气：晴 36℃</span></li>
                                <li class="h-[51px]"><button aria-label="显示图层"><svg class="h-3 w-4"><use href="#eye"/></svg></button><svg class="ml-4 mt-[17px] h-[25px] w-[25px]"><use href="#tee-warn"/></svg><span class="-ml-px">施工责任人：候候鹏</span></li>
                                <li class="h-[51px]"><button aria-label="显示图层"><svg class="h-3 w-4"><use href="#eye"/></svg></button><svg class="ml-4 mt-[17px] h-[25px] w-[25px]"><use href="#tee-warn"/></svg><span class="-ml-px">施 工 内 容：转材料</span></li>
                                <li class="h-[51px]"><button aria-label="显示图层"><svg class="h-3 w-4"><use href="#eye"/></svg></button><svg class="ml-4 mt-[17px] h-[25px] w-[25px]"><use href="#tee-warn"/></svg><span class="-ml-px">施 工 区 域：市优检查</span></li>
                                <li class="h-[51px]"><button aria-label="显示图层"><svg class="h-3 w-4"><use href="#eye"/></svg></button><svg class="ml-4 mt-[17px] h-[25px] w-[25px]"><use href="#tee-warn"/></svg><span class="-ml-px">工程记录</span></li>
                                <li class="h-[52px]"><button aria-label="显示图层"><svg class="h-3 w-4"><use href="#eye"/></svg></button><svg class="ml-1 mt-[6px] h-[39px] w-10" viewBox="0 0 40 39"><path d="M.5.500h39v38H.5z" fill="none" stroke="#333"/><path d="M9 9h23v23H9z" fill="#fff"/><path d="M9 11h23M9 17h23M9 23h23M9 29h23" stroke="#ccc" stroke-width="3" stroke-dasharray="3 3"/><circle cx="21" cy="21" r="10.500" fill="#f9c50c"/><path d="M23 22h16v16H23z" fill="#535353"/><use href="#shape" x="25" y="24" width="14" height="14" color="#dedede"/></svg><span class="-ml-1">椭圆 1</span></li>
                                <li class="relative h-[52px]"><button aria-label="显示图层"><svg class="h-3 w-4"><use href="#eye"/></svg></button><svg class="ml-1 mt-[14px] h-6 w-[41px]" viewBox="0 0 41 24"><path d="M.5.500h40v23H.5z" fill="none" stroke="#333"/><path d="M9 5h23v14H9z" fill="#fff"/><path d="M25 7h15v16H25z" fill="#535353"/><use href="#shape" x="26" y="8" width="14" height="14" color="#dedede"/></svg><span class="-ml-[5px]">矩形 1</span><svg class="absolute right-[21px] top-[18px] h-[15px] w-3"><use href="#lock"/></svg></li>
                                <li class="h-[51px]"><button aria-label="显示图层"></button><div class="flex flex-1 bg-[#6a6a6a]"><svg class="ml-px mt-[2px] h-11 w-[94px]" viewBox="0 0 94 44"><path d="M1 8V1h15M31 1h14v7" fill="none" stroke="#fff" stroke-width="1.500"/><path d="M3.500 44V4.500h38V44M62.500 44V4.500h30V44" fill="#535353" stroke="#333"/></svg></div></li>
                            </ul>
                            <div class="relative w-[19px] bg-[#4a4a4a]">
                                <svg class="absolute left-[6px] top-[10px] h-[6px] w-[9px] rotate-180 text-[#aaa]"><use href="#down"/></svg>
                                <div class="absolute bottom-[58px] left-[2px] top-[147px] w-[14px] rounded-sm bg-[#6a6a6a]"></div>
                            </div>
                        </div>

                        <!-- Panel actions -->
                        <div class="flex h-7 shrink-0 items-center justify-between border-t border-[#404040] pl-[50px] pr-[36px] pt-[2px]">
                            <svg class="h-[10px] w-[18px] text-[#8c8c8c]" viewBox="0 0 18 10"><path d="M8 1.500H5a3.500 3.500 0 0 0 0 7h3M10 1.500h3a3.500 3.500 0 0 1 0 7h-3M5.500 5h7" fill="none" stroke="currentColor" stroke-width="1.600"/></svg>
                            <button class="relative text-[17px] italic leading-5" aria-label="图层样式">fx<svg class="absolute -right-1 bottom-0 h-1 w-1" viewBox="0 0 4 4"><path d="M0 1h4L2 3z" fill="#fff"/></svg></button>
                            <svg class="h-3 w-4" viewBox="0 0 16 12"><path d="M0 0h16v12H0z" fill="#999"/><circle cx="8" cy="6" r="3.500" fill="#535353"/></svg>
                            <button class="relative" aria-label="调整图层"><svg class="h-[14px] w-[14px]"><use href="#adjust"/></svg><svg class="absolute -bottom-1 -right-1 h-1 w-1" viewBox="0 0 4 4"><path d="M0 1h4L2 3z" fill="#fff"/></svg></button>
                            <svg class="h-3 w-4" viewBox="0 0 16 12"><path d="M0 0h6l1.500 2H16v10H0z" fill="#dedede"/></svg>
                            <svg class="h-[14px] w-[14px]" viewBox="0 0 14 14"><path d="M.8.800h12.500v12.500H.8zM7 4v6M4 7h6" fill="none" stroke="#dedede" stroke-width="1.500"/></svg>
                            <svg class="h-[15px] w-[13px]" viewBox="0 0 13 15"><path d="M0 2.500h13M4.500 2V.8h4V2M1.800 3v11.200h9.500V3M4.500 5v7M6.500 5v7M8.500 5v7" fill="none" stroke="#dedede" stroke-width="1.300"/></svg>
                        </div>
                    </section>
                </div>
            </aside>
        </div>
    </div>

    <!-- Input method bar -->
    <div class="fixed bottom-[31px] right-[3px] flex h-[38px] w-[309px] items-center rounded-md bg-white text-[#1a1a1a]">
        <svg class="ml-[11px] h-5 w-6" viewBox="0 0 24 20"><path d="M21 2.500C14 .5 4.500 2 4.500 6s14 3 14 7.500S8 18.500 2 16.500" fill="none" stroke="#e0702a" stroke-width="4.500"/></svg>
        <div class="ml-[9px] h-6 w-px bg-[#ccc]"></div>
        <span class="ml-3 text-[20px] font-medium leading-none">中</span>
        <svg class="ml-[17px] h-[18px] w-[13px]" viewBox="0 0 13 18"><circle cx="3" cy="3" r="2.300" fill="none" stroke="#1a1a1a" stroke-width="1.400"/><circle cx="10" cy="13" r="2.200" fill="#1a1a1a"/><path d="M11.500 13c0 2-.8 3-2.500 4" fill="none" stroke="#1a1a1a" stroke-width="1.500"/></svg>
        <svg class="ml-[19px] h-5 w-[18px]" viewBox="0 0 18 20"><rect x="5" y="1" width="8" height="13" rx="4" fill="none" stroke="#1a1a1a" stroke-width="1.600"/><path d="M1 9a8 8 0 0 0 16 0M9 17v3" fill="none" stroke="#1a1a1a" stroke-width="1.600"/></svg>
        <svg class="ml-[19px] h-5 w-5" viewBox="0 0 20 20"><rect x="1" y="1" width="18" height="18" rx="2" fill="none" stroke="#1a1a1a" stroke-width="1.600"/><path d="M5 6h2M9 6h2M13 6h2M5 9.500h2M9 9.500h2M13 9.500h2M6 14.500h8" stroke="#1a1a1a" stroke-width="1.600"/></svg>
        <svg class="ml-[18px] h-[26px] w-6" viewBox="0 0 24 26"><defs><linearGradient id="shirt" x1="0" y1="0" x2="1" y2="1"><stop offset="0" stop-color="#f0584a"/><stop offset=".5" stop-color="#8a7cf0"/><stop offset="1" stop-color="#4fb8ff"/></linearGradient></defs><path d="M5 7l4 1.500h2L15 7l4 4-2.500 3.500-2-1V24H5.500V13.500l-2.500 1L0 10.500z" fill="url(#shirt)"/><circle cx="19.500" cy="4.500" r="4" fill="#f5553d"/></svg>
        <svg class="ml-[15px] h-5 w-5" viewBox="0 0 20 20"><g fill="none" stroke="#1a1a1a" stroke-width="1.700"><rect x="1" y="1" width="7" height="7" rx="1"/><circle cx="15.500" cy="4.500" r="3.600"/><rect x="1" y="12" width="7" height="7" rx="1"/><rect x="12" y="12" width="7" height="7" rx="1"/></g></svg>
        <svg class="ml-[15px] h-6 w-[27px]" viewBox="0 0 27 24"><circle cx="12" cy="12" r="11.500" fill="#f6f2f0" stroke="#e8e2e0"/><path d="M1 8c5-3 12-4 17-3v4c-5 3-12 4-15 4z" fill="#e8622a"/><path d="M3 9l5-1 1 3-4 2zM11 8l5-1-1 3-3 1z" fill="#3a2220"/><path d="M5 14a2 1.500 0 0 0 4 0zM12 17l3-3" fill="#222" stroke="#444"/><path d="M23 4l1 3 3 1-3 1-1 3-1-3-2-1 2-1z" fill="#ffd84a"/></svg>
    </div>

</body>
</html>
